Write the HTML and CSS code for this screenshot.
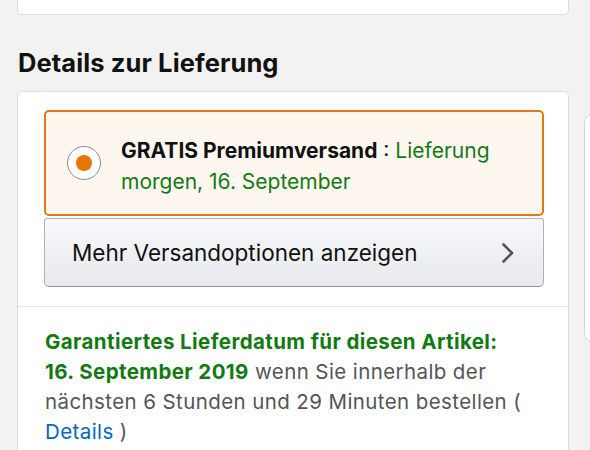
FILE: index.html
```html
<!DOCTYPE html>
<html lang="de">
<head>
<meta charset="utf-8">
<link rel="stylesheet" href="styles.css">
</head>
<body>
<div class="page">
  <div class="column">
    <div class="card top-card"></div>
    <h2 class="heading">Details zur Lieferung</h2>
    <div class="card delivery">
      <div class="options">
        <div class="option selected">
          <span class="radio"><span class="dot"></span></span>
          <p class="option-text"><b class="option-name">GRATIS Premiumversand</b> : <span class="green">Lieferung morgen, 16. September</span></p>
        </div>
        <div class="more-btn">
          <span>Mehr Versandoptionen anzeigen</span>
          <svg class="chevron" width="14" height="22" viewBox="0 0 14 22"><path d="M2.5 2.5 L11 11 L2.5 19.5" fill="none" stroke="#555" stroke-width="2.6" stroke-linecap="round" stroke-linejoin="round"/></svg>
        </div>
      </div>
      <div class="guarantee">
        <p><b class="green">Garantiertes Lieferdatum für diesen Artikel: 16. September 2019</b> wenn Sie innerhalb der nächsten 6 Stunden und 29 Minuten bestellen ( <a class="link">Details</a> )</p>
      </div>
    </div>
  </div>
  <div class="peek"></div>
</div>
</body>
</html>
```
FILE: styles.css
```css
html, body {
  margin: 0;
  padding: 0;
  background: #f2f2f2;
  overflow: hidden;
}
body {
  font-family: Inter, Roboto, Arial, sans-serif;
  color: #111;
}
.page {
  display: flex;
  align-items: flex-start;
  padding-left: 17px;
  gap: 15px;
  width: 700px;
}
.column {
  width: 552px;
  flex: none;
}
.card {
  background: #fff;
  border: 1px solid #dedede;
  border-radius: 5px;
  box-sizing: border-box;
}
.top-card {
  height: 15px;
  border-top: none;
  border-radius: 0 0 5px 5px;
}
.heading {
  margin: 0;
  padding: 32px 0 0 1px;
  height: 76px;
  box-sizing: border-box;
  font-size: 25.5px;
  letter-spacing: 0.1px;
  line-height: 32px;
  font-weight: 700;
  color: #111;
}
.delivery {
  overflow: hidden;
  padding-bottom: 60px;
}
.options {
  padding: 18px 24px 19px 26px;
  border-bottom: 1px solid #e3e3e3;
}
.option {
  display: flex;
  align-items: center;
  gap: 20px;
  height: 106px;
  box-sizing: border-box;
  padding: 6px 20px 0 21px;
  border: 2px solid #e47911;
  border-radius: 5px;
  background: #fef7f0;
}
.radio {
  flex: none;
  width: 34px;
  height: 34px;
  margin-top: -6px;
  box-sizing: border-box;
  border: 1.5px solid #8d8d8d;
  border-radius: 50%;
  background: #fff;
  display: flex;
  align-items: center;
  justify-content: center;
}
.dot {
  width: 16px;
  height: 16px;
  border-radius: 50%;
  background: #e77600;
}
.option-text {
  margin: 0;
  font-size: 21px;
  line-height: 31px;
  color: #111;
}
.option-name {
  font-weight: 700;
}
.green {
  color: #137a13;
}
.more-btn {
  margin-top: 2px;
  height: 69px;
  box-sizing: border-box;
  display: flex;
  align-items: center;
  justify-content: space-between;
  padding: 0 28px 0 27px;
  border: 1px solid #adb1b8;
  border-bottom-color: #8d9096;
  border-radius: 3px 3px 5px 5px;
  background: linear-gradient(#f7f8fa, #e7e9ec);
  font-size: 22.5px;
  color: #111;
}
.chevron {
  display: block;
}
.guarantee {
  padding: 20px 38px 0 27px;
}
.guarantee p {
  margin: 0;
  font-size: 20.5px;
  letter-spacing: 0.4px;
  line-height: 30px;
  color: #555;
}
.guarantee b {
  font-weight: 700;
}
.link {
  color: #0066c0;
}
.peek {
  flex: none;
  margin-top: 113px;
  width: 40px;
  height: 228px;
  background: #fff;
  border: 1px solid #d5d5d5;
  border-radius: 10px;
}
```
